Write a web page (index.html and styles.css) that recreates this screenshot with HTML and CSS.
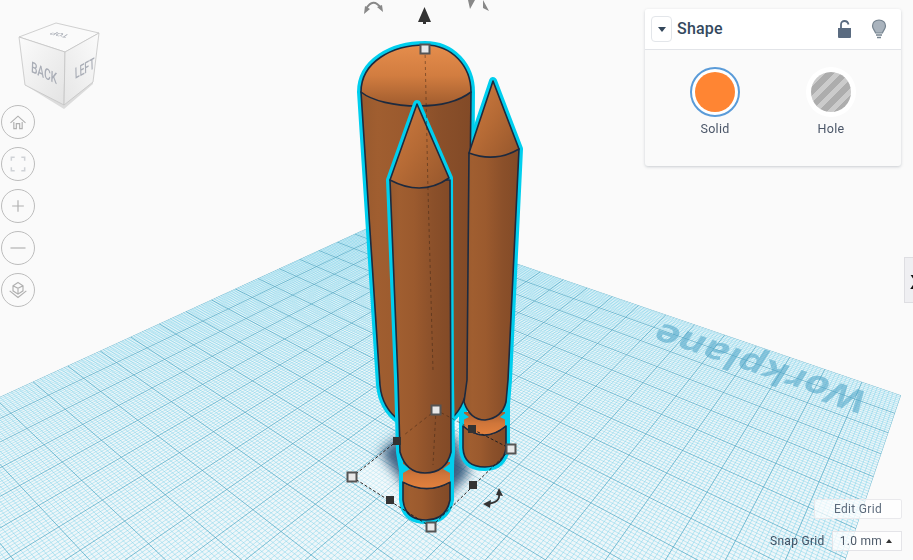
FILE: index.html
```html
<!DOCTYPE html>
<html lang="en">
<head>
<meta charset="utf-8">
<title>Shape editor</title>
<link rel="stylesheet" href="styles.css">
</head>
<body>
<main class="stage">
  <canvas id="plane" class="layer" width="913" height="560"></canvas>
  <span class="plane-label">Workplane</span>

  <svg class="layer" viewBox="0 0 913 560" aria-hidden="true">
    <defs>
      <linearGradient id="body" x1="0" x2="1" y1="0" y2="0">
        <stop offset="0" stop-color="#985a2e"/><stop offset=".15" stop-color="#a05e30"/>
        <stop offset=".4" stop-color="#9b5a2e"/><stop offset=".7" stop-color="#8b502a"/>
        <stop offset="1" stop-color="#824a27"/>
      </linearGradient>
      <linearGradient id="dome" x1="0" x2="0" y1="0" y2="1">
        <stop offset="0" stop-color="#e58d4c"/><stop offset=".5" stop-color="#d27d40"/>
        <stop offset="1" stop-color="#a05c2e"/>
      </linearGradient>
      <linearGradient id="cone" x1="0" x2="1" y1="0" y2="1">
        <stop offset="0" stop-color="#d07c40"/><stop offset=".5" stop-color="#b56a35"/>
        <stop offset="1" stop-color="#95562c"/>
      </linearGradient>
      <linearGradient id="band" x1="0" x2="0" y1="0" y2="1">
        <stop offset="0" stop-color="#a85f30"/><stop offset=".5" stop-color="#d0763a"/>
        <stop offset="1" stop-color="#e3813d"/>
      </linearGradient>
      <filter id="soft" x="-50%" y="-50%" width="200%" height="200%"><feGaussianBlur stdDeviation="6"/></filter>
    </defs>

    <polygon class="sel-fill" points="352,477 431,410 511,449 431,527"/>
    <path class="shadow" d="M380 452L400 436H455L470 472L445 500H415Z" filter="url(#soft)"/>

    <!-- back group: silhouette first, then fills -->
    <g class="halo">
      <path d="M361 92C361 62 392 45 425 45C452 45 471 66 471 92L469 380Q466 405 452 418L400 421Q382 408 380 385Z"/>
      <path d="M493 81L519 149L508 380L506 405V448Q503 467 485 467Q464 467 463 448V405L469 153Z"/>
    </g>
    <path class="fill-body line" d="M361 92L380 385Q382 408 400 421L452 418Q466 405 468 380L471 92Z"/>
    <path class="fill-dome line" d="M361 92C361 62 392 45 425 45C452 45 471 66 471 92C458 102 440 106 418 106C395 106 372 101 361 92Z"/>

    <path class="fill-body line" d="M463 426V448Q464 467 485 467Q503 467 506 448V426Q484 444 463 426Z"/>
    <path class="fill-band" d="M464 412H505V426Q484 444 464 426Z"/>
    <path class="line-only" d="M463 426Q484 444 506 426"/>
    <path class="notch" d="M462 412L469 417L463 420ZM507 412L500 417L506 420Z"/>
    <path class="fill-body line" d="M469 153L467 380L464 402Q470 420 485 420Q502 418 506 402L508 380L519 149Z"/>
    <path class="fill-cone line" d="M493 81L519 149Q495 163 469 153Z"/>

    <!-- front rocket -->
    <g class="halo">
      <path d="M417 104L449 178L450 380L451 452Q450 460 450 470V500Q446 520 426 520Q405 520 403 500V470L400 452L398 380L390 180Z"/>
    </g>
    <path class="fill-body line" d="M403 482V500Q405 520 426 520Q446 520 450 500V482Q427 495 403 482Z"/>
    <path class="fill-band" d="M403 462H450V482Q427 495 403 482Z"/>
    <path class="line-only" d="M403 482Q427 495 450 482"/>
    <path class="notch" d="M402 463L410 469L403 473ZM451 463L443 469L450 473Z"/>
    <path class="fill-body line" d="M390 180L398 380L400 452Q406 473 425 473Q446 473 451 452L450 180Z"/>
    <path class="fill-cone line" d="M417 104L449 178Q422 197 390 180Z"/>

    <!-- construction lines -->
    <path class="guide" d="M425 49L428 190L433 370"/>
    <path class="guide" d="M436 410L433 465M436 410L404 435M436 410L472 429"/>
    <path class="sel-line" d="M352 477L397 441M352 477L431 527L511 449L472 429"/>

    <!-- handles -->
    <g class="handle-w">
      <rect x="420.500" y="44.500" width="9" height="9"/>
      <rect x="431.500" y="405.500" width="9" height="9"/>
      <rect x="347.500" y="472.500" width="9" height="9"/>
      <rect x="426.500" y="522.500" width="9" height="9"/>
      <rect x="506.500" y="444.500" width="9" height="9"/>
    </g>
    <g class="handle-k">
      <rect x="393.500" y="437.500" width="7" height="7"/>
      <rect x="386.500" y="496.500" width="7" height="7"/>
      <rect x="469.500" y="481.500" width="7" height="7"/>
      <rect x="468.500" y="425.500" width="7" height="7"/>
    </g>

    <!-- rotate arrows -->
    <path class="arc-k" d="M499 493Q501 503 486 504"/>
    <path class="head-k" d="M499 488L503 496L496 495ZM483 504L491 500L490 508Z"/>
    <path class="arc-g" d="M366 9Q373 -3 381 8"/>
    <path class="head-g" d="M364 14L365 6L370 9ZM383 12L377 7L382 5Z"/>
    <path class="head-g" d="M468 0H475L470 9ZM483 0L489 11L483 8Z"/>
    <path class="head-k2" d="M424.500 7L431 22H426V24H423V22H418Z"/>
  </svg>

  <div class="cube" aria-hidden="true">
    <svg class="cube-art" viewBox="0 0 110 110">
      <defs>
        <linearGradient id="faceL" x1="0" x2="1" y1="0" y2="1"><stop offset="0" stop-color="#fbfbfb"/><stop offset="1" stop-color="#e3e3e3"/></linearGradient>
        <linearGradient id="faceR" x1="0" x2="1" y1="1" y2="0"><stop offset="0" stop-color="#e6e6e6"/><stop offset="1" stop-color="#fbfbfb"/></linearGradient>
      </defs>
      <polygon class="cube-shade" points="25,85 64,109 93,84 93,80 64,100 25,80"/>
      <polygon class="cube-face" points="19,37 56,23 99,33 65,52" fill="#fafafa"/>
      <polygon class="cube-face" points="19,37 65,52 64,105 25,85" fill="url(#faceL)"/>
      <polygon class="cube-face" points="65,52 99,33 93,82 64,105" fill="url(#faceR)"/>
      <text class="cube-text" transform="matrix(.72 .34 -.03 1.100 31 72)">BACK</text>
      <text class="cube-text" transform="matrix(.62 -.34 .03 1.100 75 79)">LEFT</text>
      <text class="cube-text small" transform="matrix(-.8 -.18 .55 -.38 70 35)">TOP</text>
    </svg>
  </div>

  <nav class="view-tools">
    <button class="tool" aria-label="Home">
      <svg viewBox="0 0 24 24"><path d="M3 13L12 5L21 13M7 12V20H10V14H14V20H17V12"/></svg>
    </button>
    <button class="tool" aria-label="Fit">
      <svg viewBox="0 0 24 24" class="light"><path d="M4 8V4H8M16 4H20V8M20 16V20H16M8 20H4V16"/></svg>
    </button>
    <button class="tool" aria-label="Zoom in">
      <svg viewBox="0 0 24 24"><path d="M12 5V19M5 12H19"/></svg>
    </button>
    <button class="tool" aria-label="Zoom out">
      <svg viewBox="0 0 24 24"><path d="M3 12H21"/></svg>
    </button>
    <button class="tool" aria-label="Perspective">
      <svg viewBox="0 0 24 24"><path d="M12 3L18 7V13L12 17L6 13V7ZM6 7L12 10L18 7M12 10V17M2 13L12 21L22 13"/></svg>
    </button>
  </nav>

  <section class="panel">
    <header class="panel-head">
      <button class="collapse" aria-label="Collapse"><span class="caret"></span></button>
      <h2 class="panel-title">Shape</h2>
      <svg class="lock" viewBox="0 0 14 18"><path class="lock-body" d="M0 8H13V17Q13 18 12 18H1Q0 18 0 17Z"/><path class="lock-arc" d="M3 8V4.500C3 2 4.500 1 6.500 1S10 2 10.500 4.500"/></svg>
      <svg class="bulb" viewBox="0 0 16 20"><path class="bulb-glass" d="M8 1C4 1 1.500 3.500 1.500 7C1.500 10 4 11.500 4.500 14H11.500C12 11.500 14.500 10 14.500 7C14.500 3.500 12 1 8 1Z"/><path class="bulb-base" d="M5 16H11M6 18.500H10"/></svg>
    </header>
    <div class="panel-body">
      <div class="choice">
        <span class="ring ring-on"><span class="swatch swatch-solid"></span></span>
        <span class="choice-label">Solid</span>
      </div>
      <div class="choice">
        <span class="ring"><span class="swatch swatch-hole"></span></span>
        <span class="choice-label">Hole</span>
      </div>
    </div>
  </section>

  <aside class="side-tab"><span class="side-glyph">X</span></aside>

  <div class="grid-tools">
    <button class="edit-grid">Edit Grid</button>
    <div class="snap">
      <span class="snap-label">Snap Grid</span>
      <div class="snap-select"><span>1.0 mm</span><span class="caret-up"></span></div>
    </div>
  </div>
</main>
<script src="grid.js"></script>
</body>
</html>
```
FILE: styles.css
```css
* { box-sizing: border-box; }
html, body { margin: 0; height: 100%; }
body { background: #fafafa; overflow: hidden; font-family: Roboto, "Noto Sans", sans-serif; }
.stage { position: relative; width: 913px; height: 560px; overflow: hidden; }
.layer { position: absolute; left: 0; top: 0; width: 913px; height: 560px; }

.plane-label {
  position: absolute; left: 0; top: 0;
  font: 700 40px/40px "Open Sans", sans-serif;
  color: rgba(80, 165, 200, .58);
  white-space: nowrap;
  transform-origin: 0 0;
  transform: matrix(-.96, -.325, .46, -.7, 855, 418);
}

.sel-fill { fill: rgba(255, 255, 255, .38); }
.shadow { fill: rgba(40, 80, 115, .9); }
.halo path { fill: none; stroke: #00cfee; stroke-width: 8; stroke-linejoin: round; }
.notch { fill: #00cfee; }
.line { stroke: #1c2a3f; stroke-width: 1.6; stroke-linejoin: round; }
.line-only { fill: none; stroke: #1c2a3f; stroke-width: 1.4; }
.fill-body { fill: url(#body); }
.fill-dome { fill: url(#dome); }
.fill-cone { fill: url(#cone); }
.fill-band { fill: url(#band); }
.guide { fill: none; stroke: rgba(60, 35, 20, .5); stroke-width: 1; stroke-dasharray: 3 3; }
.sel-line { fill: none; stroke: #222; stroke-width: 1; stroke-dasharray: 3 2; }
.handle-w rect { fill: #e8e8e8; stroke: #555; stroke-width: 2; }
.handle-k rect { fill: #333; stroke: #333; }
.arc-k { fill: none; stroke: #333; stroke-width: 1.800; }
.head-k { fill: #333; }
.arc-g { fill: none; stroke: #888; stroke-width: 2; }
.head-g { fill: #888; }
.head-k2 { fill: #333; }

.cube { position: absolute; left: 0; top: 0; width: 110px; height: 110px; }
.cube-art { display: block; width: 110px; height: 110px; }
.cube-shade { fill: #dcdcdc; }
.cube-face { stroke: #c4c4c4; stroke-width: .8; }
.cube-text { font: 500 14px Roboto, sans-serif; fill: #a9adb6; }
.cube-text.small { font-size: 11px; }

.view-tools { position: absolute; left: 1px; top: 105px; display: flex; flex-direction: column; gap: 8px; }
.tool {
  width: 34px; height: 34px; padding: 0; border-radius: 50%;
  border: 1px solid #bcbcbc; background: #fafafa;
  display: flex; align-items: center; justify-content: center;
}
.tool svg { width: 20px; height: 20px; fill: none; stroke: #b0b0b0; stroke-width: 1.4; }
.tool svg.light { stroke: #cfd2d6; stroke-width: 1.800; }

.panel {
  position: absolute; left: 645px; top: 9px; width: 256px; height: 157px;
  background: #fafafa; border-radius: 3px;
  box-shadow: 0 1px 3px rgba(60, 70, 90, .25);
  overflow: hidden;
}
.panel-head {
  height: 41px; background: #fff; border-bottom: 1px solid #e2e4e8;
  display: flex; align-items: center; padding: 0 14px 0 6px;
}
.collapse {
  width: 21px; height: 26px; padding: 0; background: #fff;
  border: 1px solid #e3e6ea; border-radius: 4px;
  display: flex; align-items: center; justify-content: center;
}
.caret { width: 0; height: 0; border: 4px solid transparent; border-top: 5px solid #33475b; border-bottom: 0; }
.panel-title { margin: 0 0 0 5px; font: 500 16px/1 Roboto, sans-serif; letter-spacing: .2px; color: #34495e; flex: 1; }
.lock { width: 14px; height: 18px; margin-right: 19px; }
.lock-body { fill: #5a6b80; }
.lock-arc { fill: none; stroke: #5a6b80; stroke-width: 1.800; }
.bulb { width: 16px; height: 20px; }
.bulb-glass { fill: #a9b3bd; stroke: #75838f; stroke-width: 1.200; }
.bulb-base { fill: none; stroke: #75838f; stroke-width: 1.500; }

.panel-body { display: flex; padding-top: 17px; padding-left: 45px; gap: 66px; }
.choice { width: 50px; display: flex; flex-direction: column; align-items: center; gap: 4px; }
.ring {
  width: 50px; height: 50px; border-radius: 50%; background: #fff;
  display: flex; align-items: center; justify-content: center;
}
.ring-on { border: 2px solid #5a9bd8; }
.swatch { width: 40px; height: 40px; border-radius: 50%; }
.swatch-solid { background: #ff8533; }
.swatch-hole { background: repeating-linear-gradient(135deg, #adadad 0 6px, #cbcbcb 6px 11px); }
.choice-label { font: 400 12.500px/16px Roboto, sans-serif; letter-spacing: .3px; color: #4b5668; white-space: nowrap; }

.side-tab {
  position: absolute; left: 904px; top: 257px; width: 20px; height: 46px;
  background: #efeff2; border: 1px solid #dedee2; overflow: hidden;
  padding: 13px 0 0 5px;
}
.side-glyph { display: block; font: 700 21px/21px "Liberation Sans", sans-serif; color: #111; }

.grid-tools { position: absolute; left: 770px; top: 499px; width: 132px; display: flex; flex-direction: column; align-items: flex-end; gap: 12px; }
.edit-grid {
  width: 88px; height: 20px; padding: 0;
  background: rgba(255, 255, 255, .7); border: 1px solid #e9e9ec; border-radius: 2px;
  font: 400 12px/1 Roboto, sans-serif; letter-spacing: .3px; color: #5d6b7c;
}
.snap { display: flex; align-items: center; gap: 7px; width: 100%; }
.snap-label { font: 400 12px/1 Roboto, sans-serif; letter-spacing: .3px; color: #3f5063; white-space: nowrap; }
.snap-select {
  flex: 1; height: 20px; padding: 0 9px 0 7px;
  background: rgba(255, 255, 255, .7); border: 1px solid #e4e4e8;
  display: flex; align-items: center; justify-content: space-between;
  font: 400 12px/1 Roboto, sans-serif; letter-spacing: .3px; color: #4e5a69;
}
.caret-up { width: 0; height: 0; border: 3.500px solid transparent; border-bottom: 4px solid #333; border-top: 0; }
```
FILE: grid.js
```js
(function () {
  var ctx = document.getElementById('plane').getContext('2d');
  // Projective map of the 200 x 200 mm workplane: far corner plus two vanishing points.
  var F = [387, 219], V1 = [-523, -93], V2 = [1066, -93], A = -0.361, B = -0.457;
  function pt(a, b) {
    var w = 1 + a * A + b * B;
    return [(F[0] + a * A * V1[0] + b * B * V2[0]) / w, (F[1] + a * A * V1[1] + b * B * V2[1]) / w];
  }
  function line(a0, b0, a1, b1) {
    var p = pt(a0, b0), q = pt(a1, b1);
    ctx.moveTo(p[0], p[1]);
    ctx.lineTo(q[0], q[1]);
  }
  ctx.save();
  ctx.beginPath();
  var c = [pt(0, 0), pt(1, 0), pt(1, 1), pt(0, 1)];
  ctx.moveTo(c[0][0], c[0][1]);
  for (var k = 1; k < 4; k++) ctx.lineTo(c[k][0], c[k][1]);
  ctx.closePath();
  ctx.clip();
  ctx.fillStyle = 'rgba(190,232,243,.2)';
  ctx.fill();
  ctx.lineWidth = 1;
  ctx.strokeStyle = 'rgba(110,205,230,.42)';
  ctx.beginPath();
  for (var i = 0; i <= 200; i++) {
    if (i % 10 === 0) continue;
    line(i / 200, 0, i / 200, 1);
    line(0, i / 200, 1, i / 200);
  }
  ctx.stroke();
  ctx.strokeStyle = 'rgba(70,165,195,.7)';
  ctx.beginPath();
  for (var j = 0; j <= 20; j++) {
    line(j / 20, 0, j / 20, 1);
    line(0, j / 20, 1, j / 20);
  }
  ctx.stroke();
  ctx.restore();
})();
```
